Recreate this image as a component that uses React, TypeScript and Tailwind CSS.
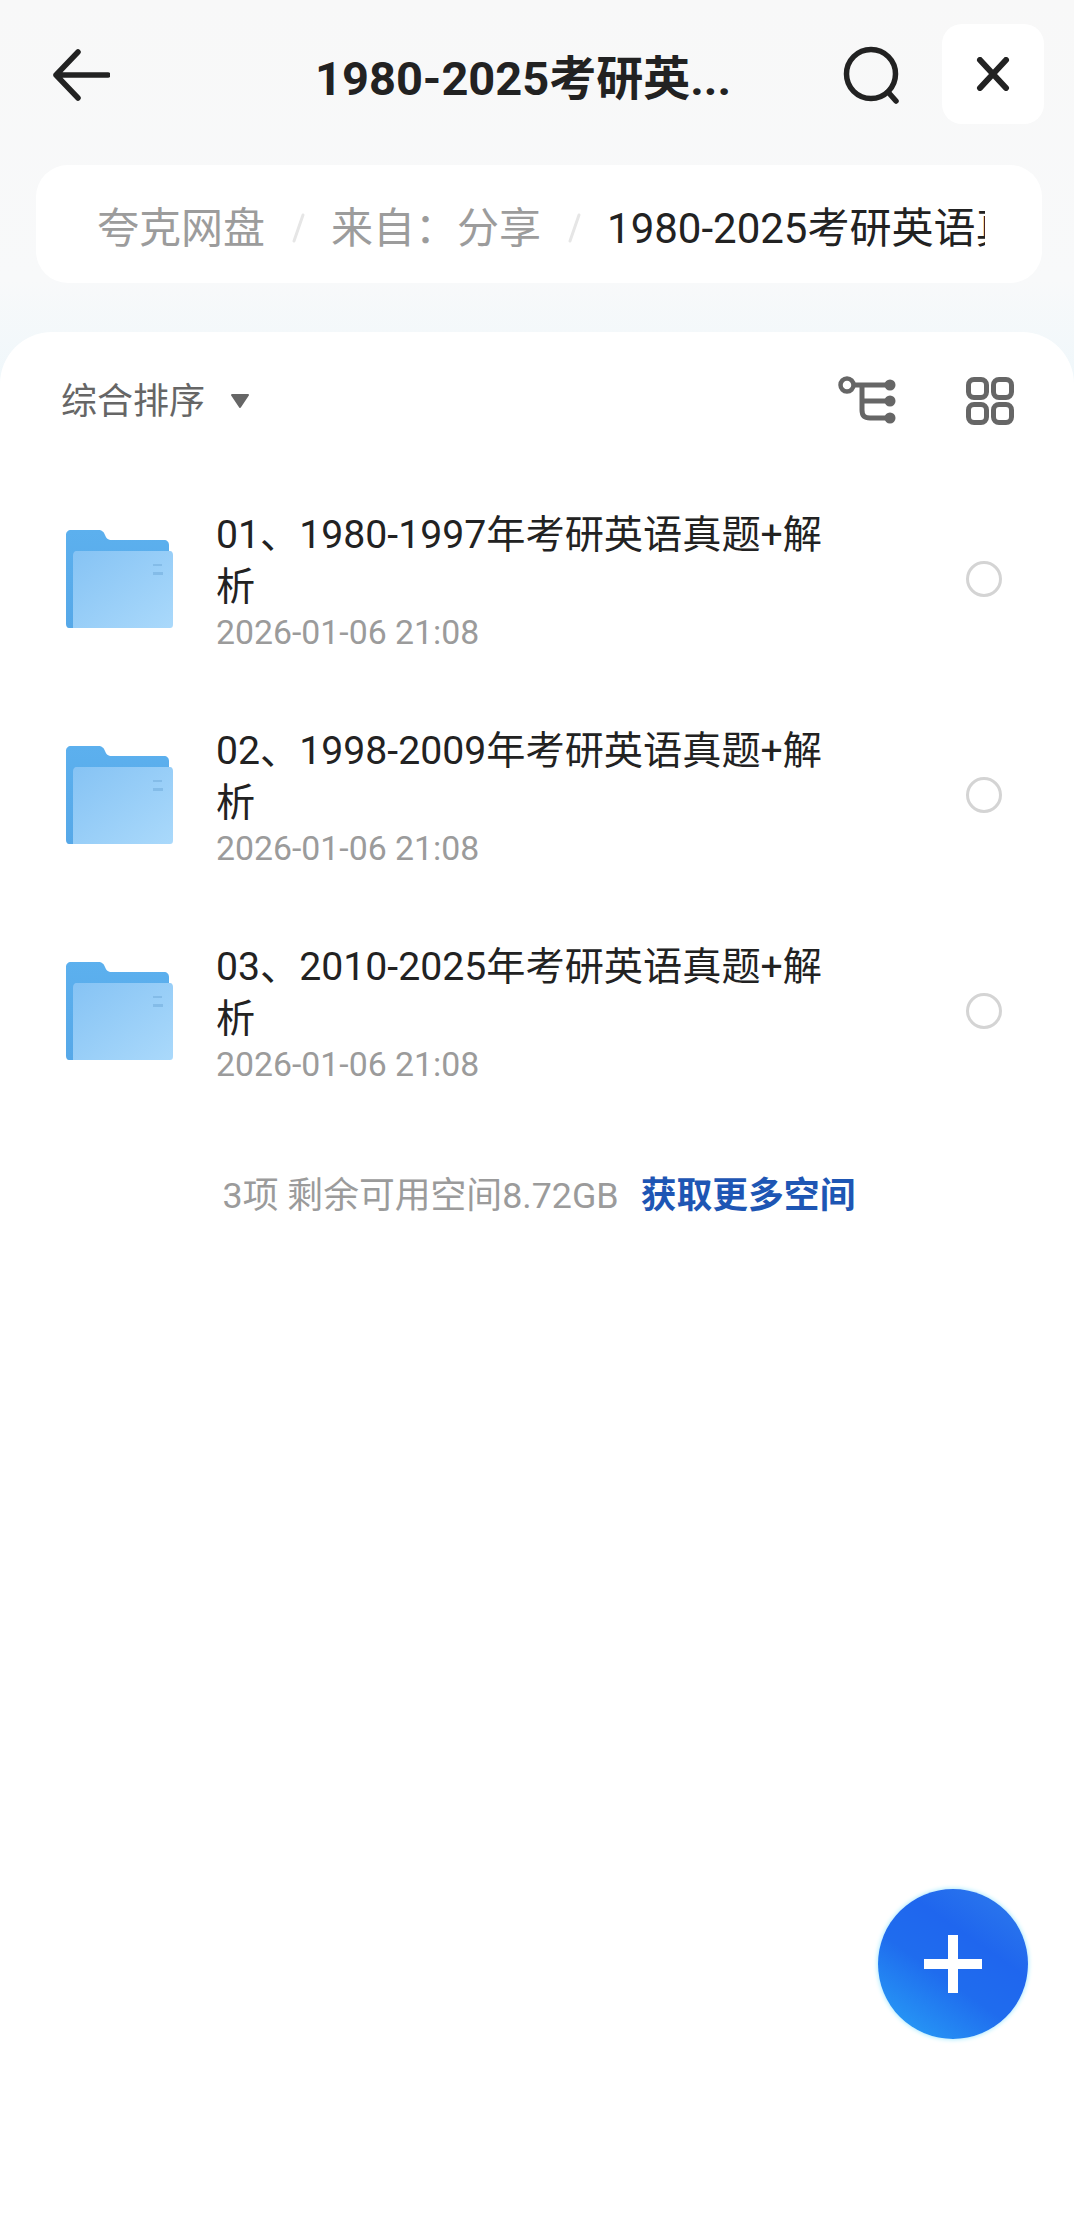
import React from "react";

const FONT = "font-['Roboto','Noto_Sans_CJK_SC',sans-serif]";

function Folder() {
  return (
    <svg width="108" height="99" viewBox="0 0 108 99" className="shrink-0">
      <defs>
        <linearGradient id="fb" x1="0" y1="0" x2="0" y2="1">
          <stop offset="0" stopColor="#5cb0ee" />
          <stop offset="1" stopColor="#56a8e8" />
        </linearGradient>
        <linearGradient id="ff" x1="0" y1="0" x2="1" y2="1">
          <stop offset="0" stopColor="#86c3f4" />
          <stop offset="1" stopColor="#aad9fb" />
        </linearGradient>
      </defs>
      <path d="M5 0H32C36 0 38 2 39 5C40 8 42 10 46 10H98C101 10 103 12 103 15V98H3C1 98 0 96 0 94V5C0 2 2 0 5 0Z" fill="url(#fb)" />
      <path d="M11 21H104C106 21 107 23 107 25V94C107 97 106 98 104 98H7V26C7 23 8 21 11 21Z" fill="url(#ff)" />
      <rect x="87" y="34" width="9" height="2" fill="#84bce8" />
      <rect x="87" y="42" width="10" height="3" fill="#84bce8" />
    </svg>
  );
}

function Row({ title }: { title: string }) {
  return (
    <div className="flex h-[216px] items-center pl-[66px] pr-[72px]">
      <Folder />
      <div className="ml-[42px] w-[620px] pt-[3px]">
        <div className="text-[39.2px] leading-[52px] text-[#222222]">{title}</div>
        <div className="text-[33.8px] leading-[40px] text-[#9b9b9b]">2026-01-06 21:08</div>
      </div>
      <div className="ml-auto h-[36px] w-[36px] rounded-full border-[3px] border-[#d4d4d4]" />
    </div>
  );
}

export default function App() {
  return (
    <div className={`${FONT} relative flex h-[2240px] w-[1074px] flex-col overflow-hidden bg-[linear-gradient(180deg,#f8f8f8_0px,#f8f9fa_280px,#eef7fb_400px)]`}>
      <header className="flex h-[148px] shrink-0 items-start">
        <div className="flex h-[100px] w-full items-start pl-[52px] pr-[30px] pt-[24px]">
          <svg width="58" height="52" viewBox="0 0 58 52" className="mt-[25px] shrink-0">
            <path d="M56 26H4M26 3L4 26L26 49" fill="none" stroke="#222" strokeWidth="5.5" strokeLinecap="round" strokeLinejoin="round" />
          </svg>
          <div className="ml-[205px] mt-[26px] whitespace-nowrap text-[47px] font-bold leading-[58px] text-[#222222]">
            1980-2025考研英...
          </div>
          <svg width="60" height="60" viewBox="0 0 60 60" className="ml-auto mt-[22px] shrink-0">
            <circle cx="29" cy="28" r="24.5" fill="none" stroke="#222" strokeWidth="5.5" />
            <path d="M46 46L54 55" stroke="#222" strokeWidth="5.5" strokeLinecap="round" />
          </svg>
          <div className="ml-[40px] flex h-[100px] w-[102px] shrink-0 items-center justify-center rounded-[20px] bg-white">
            <svg width="36" height="34" viewBox="0 0 36 34">
              <path d="M5 3L31 31M31 3L5 31" stroke="#222" strokeWidth="6" strokeLinecap="round" />
            </svg>
          </div>
        </div>
      </header>

      <nav className="ml-[36px] mr-[32px] mt-[17px] flex h-[118px] shrink-0 items-center rounded-[32px] bg-white pl-[61px] pr-[57px] text-[42px]">
        <div className="flex w-full items-center overflow-hidden whitespace-nowrap pt-[8px]">
          <span className="text-[#9c9c9c]">夸克网盘</span>
          <svg width="14" height="30" viewBox="0 0 14 30" className="mx-[26px] shrink-0">
            <path d="M12 2L3 28" stroke="#e6e6e6" strokeWidth="3" strokeLinecap="round" />
          </svg>
          <span className="text-[#9c9c9c]">{"来自\uFF1A分享"}</span>
          <svg width="14" height="30" viewBox="0 0 14 30" className="mx-[26px] shrink-0">
            <path d="M12 2L3 28" stroke="#e6e6e6" strokeWidth="3" strokeLinecap="round" />
          </svg>
          <span className="text-[#222222]">1980-2025考研英语真题+解析</span>
        </div>
      </nav>

      <main className="mt-[49px] flex flex-1 flex-col rounded-t-[52px] bg-white">
        <div className="flex h-[100px] shrink-0 items-center pl-[61px] pr-[60px] pt-[38px]">
          <span className="pt-[2px] text-[36px] text-[#666666]">综合排序</span>
          <svg width="22" height="16" viewBox="0 0 22 16" className="ml-[24px] shrink-0">
            <path d="M3 2H19L11 14Z" fill="#666" stroke="#666" strokeWidth="2" strokeLinejoin="round" />
          </svg>
          <svg width="60" height="50" viewBox="0 0 60 50" className="ml-auto shrink-0">
            <circle cx="9" cy="9" r="6.5" fill="none" stroke="#666" strokeWidth="4.5" />
            <path d="M16 9H52M24 9V34C24 40 27 42 32 42H52M24 25H52" fill="none" stroke="#666" strokeWidth="5" />
            <circle cx="52" cy="9" r="5.5" fill="#666" />
            <circle cx="52" cy="25" r="5.5" fill="#666" />
            <circle cx="52" cy="42" r="5.5" fill="#666" />
          </svg>
          <svg width="48" height="48" viewBox="0 0 48 48" className="ml-[68px] shrink-0">
            <rect x="2.5" y="2.5" width="18" height="18" rx="5.5" fill="none" stroke="#666" strokeWidth="5" />
            <rect x="27.5" y="2.5" width="18" height="18" rx="5.5" fill="none" stroke="#666" strokeWidth="5" />
            <rect x="2.5" y="27.5" width="18" height="18" rx="5.5" fill="none" stroke="#666" strokeWidth="5" />
            <rect x="27.5" y="27.5" width="18" height="18" rx="5.5" fill="none" stroke="#666" strokeWidth="5" />
          </svg>
        </div>

        <div className="mt-[39px]">
          <Row title="01、1980-1997年考研英语真题+解析" />
          <Row title="02、1998-2009年考研英语真题+解析" />
          <Row title="03、2010-2025年考研英语真题+解析" />
        </div>

        <div className="mt-[51px] flex items-center justify-center whitespace-nowrap pl-[4px] text-[35.8px]">
          <span className="text-[#9b9b9b]">3项 剩余可用空间8.72GB</span>
          <span className="ml-[22px] font-bold text-[#1e56b4]">获取更多空间</span>
        </div>
      </main>

      <div className="absolute left-[878px] top-[1889px] flex h-[150px] w-[150px] items-center justify-center rounded-full bg-[linear-gradient(35deg,#2fb0fa_0%,#2590f4_16%,#1f6cee_42%,#1f66ee_65%,#2f7cec_100%)] shadow-[0_0_5px_#8fe4ff]">
        <svg width="58" height="58" viewBox="0 0 58 58">
          <path d="M24 0H34V24H58V34H34V58H24V34H0V24H24Z" fill="#ffffff" />
        </svg>
      </div>
    </div>
  );
}
